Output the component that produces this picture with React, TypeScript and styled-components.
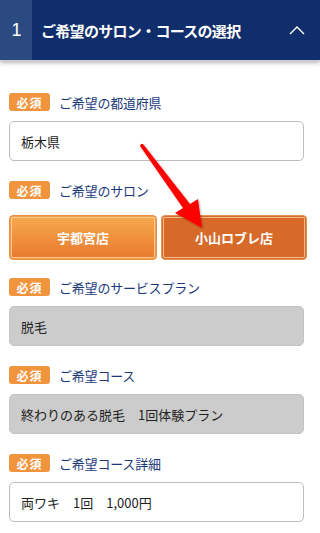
import React from "react";
import styled, { createGlobalStyle } from "styled-components";

const Global = createGlobalStyle`
  html, body { margin: 0; padding: 0; background: #fff; }
  body { font-family: "Noto Sans CJK JP", "Noto Sans", sans-serif; }
  * { box-sizing: border-box; }
`;

const Page = styled.div`
  position: relative;
  width: 320px;
  min-height: 533px;
  background: #fff;
`;

const Header = styled.header`
  display: flex;
  align-items: stretch;
  height: 61px;
  background: #0f2e6b;
  box-shadow: 0 2px 4px rgba(0, 0, 0, 0.28);
  border-bottom: 1px solid #c9ced8;
`;

const StepNo = styled.div`
  width: 32px;
  display: flex;
  align-items: center;
  justify-content: center;
  background: #2a4a80;
  color: #fff;
  font-family: "Liberation Sans", Arial, sans-serif;
  font-size: 18px;
  padding-left: 1px;
`;

const Title = styled.h1`
  flex: 1;
  margin: 0;
  padding-left: 9px;
  display: flex;
  align-items: center;
  color: #fff;
  font-size: 15px;
  font-weight: 700;
  letter-spacing: -0.7px;
`;

const Toggle = styled.div`
  width: 40px;
  display: flex;
  align-items: center;
  justify-content: center;
  padding-right: 6px;
`;

const Body = styled.main`
  display: flex;
  flex-direction: column;
  gap: 20px;
  padding: 32px 16px 10px 9px;
`;

const Field = styled.section<{ $gap?: number }>`
  display: flex;
  flex-direction: column;
  gap: ${(p) => p.$gap ?? 10}px;
`;

const LabelRow = styled.div`
  display: flex;
  align-items: center;
  height: 18px;
`;

const Badge = styled.span`
  width: 41px;
  height: 18px;
  border-radius: 3px;
  background: #f0953e;
  color: #fff;
  font-size: 12px;
  font-weight: 700;
  display: flex;
  align-items: center;
  justify-content: center;
  letter-spacing: 1px;
`;

const LabelText = styled.span`
  margin-left: 9px;
  color: #1b3a7a;
  font-size: 13px;
  letter-spacing: -0.2px;
`;

const Box = styled.div<{ $disabled?: boolean }>`
  height: 40px;
  width: 295px;
  display: flex;
  align-items: center;
  padding-left: 11px;
  border: 1px solid ${(p) => (p.$disabled ? "#c3c3c3" : "#bdbdbd")};
  border-radius: 5px;
  background: ${(p) => (p.$disabled ? "#cccccc" : "#fff")};
  color: #222;
  font-size: 13px;
  white-space: pre;
`;

const ButtonRow = styled.div`
  display: grid;
  grid-template-columns: 148px 146px;
  gap: 4px;
  margin-top: 6px;
  margin-bottom: -2px;
`;

const SalonButton = styled.button<{ $active?: boolean }>`
  height: 45px;
  border-radius: 4px;
  border: 1px solid ${(p) => (p.$active ? "#e39350" : "#ec8d3e")};
  background: ${(p) =>
    p.$active ? "#d86a29" : "linear-gradient(#f7a94c, #e8792f)"};
  box-shadow: inset 0 0 0 1px ${(p) => (p.$active ? "#d86a29" : "#f29c45")},
    inset 0 0 0 2px rgba(255, 225, 190, 0.7);
  color: #fff;
  font-family: "Noto Sans CJK JP", sans-serif;
  font-size: 13px;
  font-weight: 700;
  padding: 0;
  cursor: pointer;
`;

const Arrow = styled.svg`
  position: absolute;
  left: 134px;
  top: 138px;
  pointer-events: none;
  overflow: visible;
`;

export default function App() {
  return (
    <Page>
      <Global />
      <Header>
        <StepNo>1</StepNo>
        <Title>ご希望のサロン・コースの選択</Title>
        <Toggle>
          <svg width="16" height="9" viewBox="0 0 16 9">
            <polyline points="1,8 8,1 15,8" fill="none" stroke="#fff" strokeWidth="1.4" />
          </svg>
        </Toggle>
      </Header>
      <Body>
        <Field>
          <LabelRow>
            <Badge>必須</Badge>
            <LabelText>ご希望の都道府県</LabelText>
          </LabelRow>
          <Box>栃木県</Box>
        </Field>
        <Field>
          <LabelRow>
            <Badge>必須</Badge>
            <LabelText>ご希望のサロン</LabelText>
          </LabelRow>
          <ButtonRow>
            <SalonButton>宇都宮店</SalonButton>
            <SalonButton $active>小山ロブレ店</SalonButton>
          </ButtonRow>
        </Field>
        <Field>
          <LabelRow>
            <Badge>必須</Badge>
            <LabelText>ご希望のサービスプラン</LabelText>
          </LabelRow>
          <Box $disabled>脱毛</Box>
        </Field>
        <Field>
          <LabelRow>
            <Badge>必須</Badge>
            <LabelText>ご希望コース</LabelText>
          </LabelRow>
          <Box $disabled>終わりのある脱毛　1回体験プラン</Box>
        </Field>
        <Field>
          <LabelRow>
            <Badge>必須</Badge>
            <LabelText>ご希望コース詳細</LabelText>
          </LabelRow>
          <Box>両ワキ　1回　1,000円</Box>
        </Field>
      </Body>
      <Arrow width="80" height="100" viewBox="0 0 80 100">
        <defs>
          <filter id="sh" x="-20%" y="-20%" width="140%" height="140%">
            <feDropShadow dx="1" dy="1" stdDeviation="1" floodColor="#000" floodOpacity="0.3" />
          </filter>
        </defs>
        <polygon
          points="7,6 9,6 56,66 64,61 68,90 41,75 49,70 6,8"
          fill="#ff0000"
          filter="url(#sh)"
        />
      </Arrow>
    </Page>
  );
}
